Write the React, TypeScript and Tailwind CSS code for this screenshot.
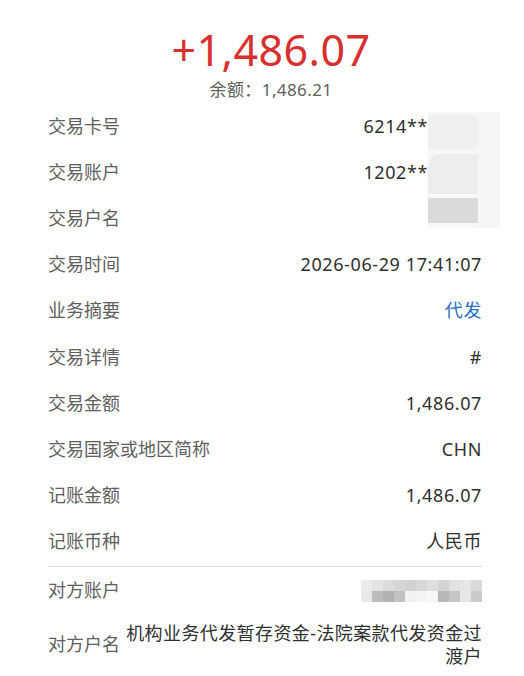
const font = { fontFamily: '"Noto Sans", "Noto Sans CJK SC", sans-serif' };

type Row = { label: string; value: string; tone?: "blue"; masked?: boolean };

const rows: Row[] = [
  { label: "交易卡号", value: "6214**", masked: true },
  { label: "交易账户", value: "1202**", masked: true },
  { label: "交易户名", value: "" },
  { label: "交易时间", value: "2026-06-29 17:41:07" },
  { label: "业务摘要", value: "代发", tone: "blue" },
  { label: "交易详情", value: "#" },
  { label: "交易金额", value: "1,486.07" },
  { label: "交易国家或地区简称", value: "CHN" },
  { label: "记账金额", value: "1,486.07" },
  { label: "记账币种", value: "人民币" },
];

const mosaicTop = ["#ebebeb", "#e4e4e4", "#dcdcdc", "#d6d6d6", "#d2d2d2", "#d8d8d8", "#dedede", "#d4d4d4", "#e2e2e2", "#e6e6e6", "#dadada"];
const mosaicBottom = ["#e8e8e8", "#bcbcbc", "#b2b2b2", "#c2c2c2", "#f2f2f2", "#f4f4f4", "#f6f6f6", "#b8b8b8", "#c6c6c6", "#e8e8e8", "#cacaca"];

function CardMosaic() {
  return (
    <div className="absolute left-[428px] top-[112px] flex h-[116px] w-[72px]">
      <div className="flex w-[50px] flex-col gap-[4px] bg-[#f8f8f8] pt-[3px]">
        <div className="h-[35px] rounded-sm bg-[#f0f0f0]" />
        <div className="h-[40px] rounded-tl-xl bg-[#ededed]" />
        <div className="h-[25px] bg-[#dadada]" />
      </div>
      <div className="flex-1 bg-[#f6f6f6]" />
    </div>
  );
}

function AccountMosaic() {
  return (
    <div className="flex flex-col">
      {[mosaicTop, mosaicBottom].map((line, i) => (
        <div key={i} className="flex">
          {line.map((c, j) => (
            <div key={j} className="h-[11px] w-[11px]" style={{ backgroundColor: c }} />
          ))}
        </div>
      ))}
    </div>
  );
}

export default function App() {
  return (
    <div className="relative h-[676px] w-[524px] overflow-hidden bg-white" style={font}>
      <div className="flex flex-col items-center pl-[18px] pt-[27px]">
        <div className="text-[43px] leading-[46px] tracking-[0.4px] text-[#d8302e]">+1,486.07</div>
        <div className="mt-[6px] text-[17px] leading-[22px] tracking-[0.4px] text-[#606060]">余额：1,486.21</div>
      </div>

      <div className="pl-[48px] pr-[42px] pt-[2px]">
        {rows.map((r) => (
          <div key={r.label} className="flex h-[46.2px] items-center justify-between text-[18px]">
            <span className="text-[#606060]">{r.label}</span>
            <span
              className={
                (r.tone === "blue" ? "text-[#2a6fc2]" : "text-[#303030]") +
                " tracking-[0.6px]" +
                (r.masked ? " mr-[54px]" : "")
              }
            >
              {r.value}
            </span>
          </div>
        ))}
        <div className="mt-[1px] h-px bg-[#dcdcdc]" />
        <div className="flex h-[48px] items-center justify-between text-[18px]">
          <span className="text-[#606060]">对方账户</span>
          <AccountMosaic />
        </div>
        <div className="mt-[7px] flex items-center gap-[4px] text-[18px]">
          <span className="shrink-0 text-[#606060]">对方户名</span>
          <span className="flex-1 text-right leading-[23px] tracking-[0.4px] text-[#303030]">
            机构业务代发暂存资金-法院案款代发资金过渡户
          </span>
        </div>
      </div>

      <CardMosaic />
    </div>
  );
}
